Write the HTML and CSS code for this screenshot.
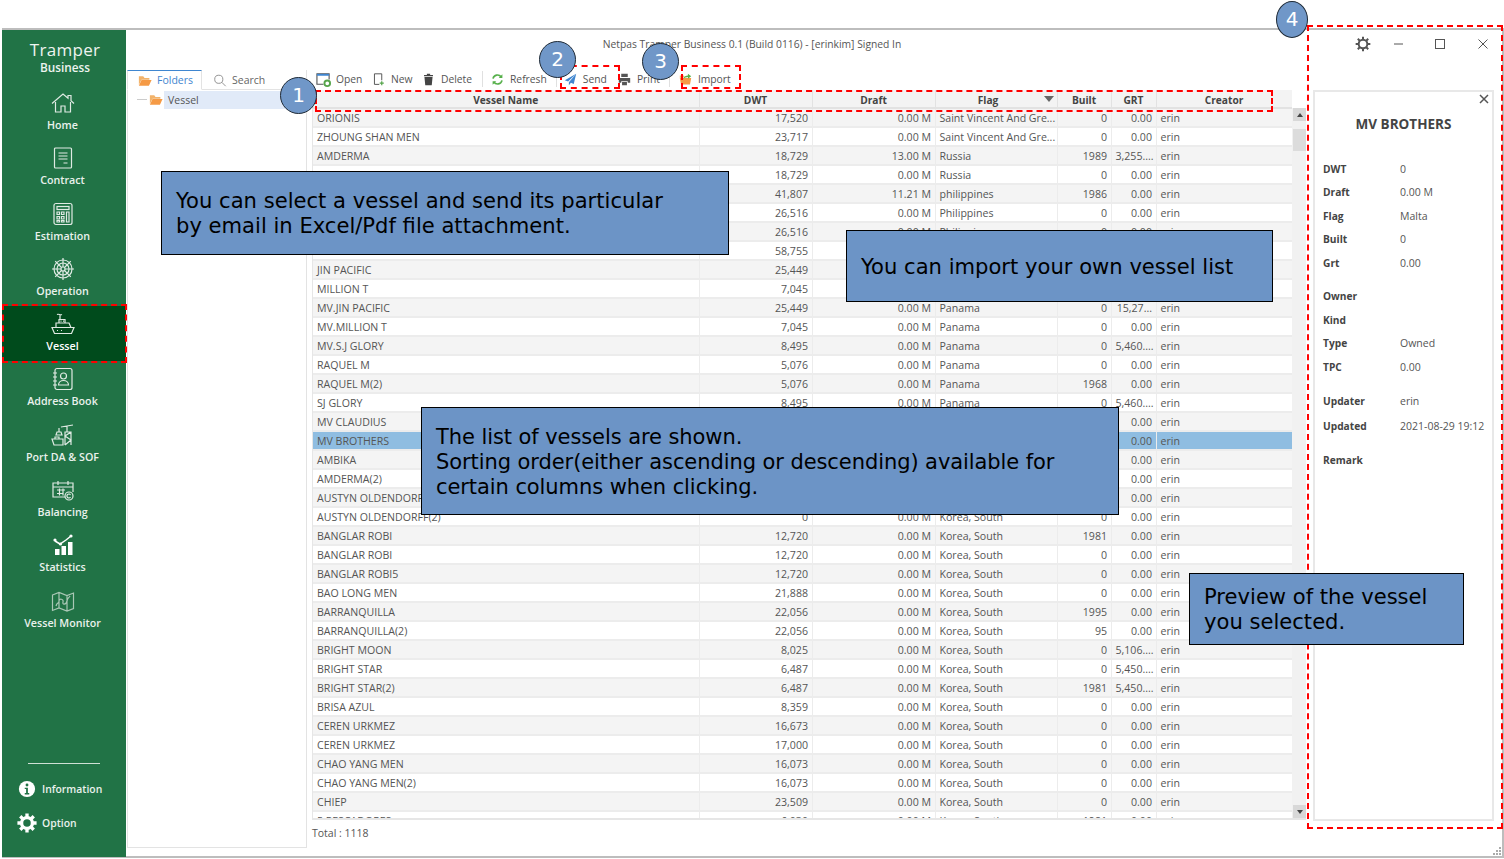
FILE: index.html
```html
<!DOCTYPE html>
<html lang="en">
<head>
  <meta charset="UTF-8">
  <title>Netpas Tramper Business</title>
  <link rel="stylesheet" href="styles.css">
</head>
<body>
  <div class="window">
    <nav class="sidebar">
      <div class="logo">
        <div class="logo-name">Tramper</div>
        <div class="logo-sub">Business</div>
      </div>
      <a class="nav-item">
        <svg class="nav-icon" viewBox="0 0 24 24"><path d="M1 12.500 12 3l5 4.200V4.500h3v5.300l3 2.700M4.500 11v10h5.500v-6h4v6h5.500V11"/></svg>
        Home
      </a>
      <a class="nav-item">
        <svg class="nav-icon" viewBox="0 0 24 24"><rect x="3.500" y="2" width="17" height="20" rx="1"/><path d="M7.500 7h9M7.500 10h9M7.500 13h9M12.500 17h4"/></svg>
        Contract
      </a>
      <a class="nav-item">
        <svg class="nav-icon" viewBox="0 0 24 24"><rect x="3" y="1.500" width="18" height="21" rx="2"/><rect x="6" y="4.500" width="12" height="3"/><path d="M6 10h2.500v2.500H6zM10.500 10H13v2.500h-2.500zM6 14.500h2.500V17H6zM10.500 14.500H13V17h-2.500zM6 18.500h2.500V20H6zM10.500 18.500H13V20h-2.500zM15.500 10H18v10h-2.500z"/></svg>
        Estimation
      </a>
      <a class="nav-item">
        <svg class="nav-icon" viewBox="0 0 24 24"><circle cx="12" cy="12" r="9"/><circle cx="12" cy="12" r="6"/><circle cx="12" cy="12" r="2"/><path d="M12 1v9M12 14v9M1 12h9M14 12h9M4.200 4.200l6.300 6.300M13.500 13.500l6.300 6.300M19.800 4.200l-6.300 6.300M10.500 13.500l-6.300 6.300"/></svg>
        Operation
      </a>
      <a class="nav-item nav-item-active">
        <svg class="nav-icon" viewBox="0 0 24 24"><path d="M1 15.500h22l-2.500 6h-17zM5 15.500V11h13l2 4.500M8 11V7.500h6V11M6 2.500c2-1 3 1 5 0M9 2.500v5"/><path d="M9.500 9.200h1M12 9.200h1M6 18.500h1M10 18.500h1"/></svg>
        Vessel
      </a>
      <a class="nav-item">
        <svg class="nav-icon" viewBox="0 0 24 24"><rect x="4" y="1.500" width="17" height="21" rx="2"/><circle cx="12.500" cy="9" r="3"/><path d="M7.500 18c0-6 10-6 10 0zM2 6h4M2 10h4M2 14h4M2 18h4"/></svg>
        Address Book
      </a>
      <a class="nav-item">
        <svg class="nav-icon" viewBox="0 0 24 24"><path d="M14 22V9h6v13M14 22l6-5-6-4 6-4M10 4l12-2M16 3v6M8 5v4M6 9h4l1 3H5zM1 16h11v6H3zM4 16v-2h4v2"/></svg>
        Port DA &amp; SOF
      </a>
      <a class="nav-item">
        <svg class="nav-icon" viewBox="0 0 24 24"><path d="M14 19H2V5h20v9"/><path d="M2 9h20M7 3v4M17 3v4M6 12h8M6 15.500h6M8.500 10.500v7M12 10.500v7"/><circle cx="18" cy="18" r="4"/><path d="M19.500 16.800a2 2 0 1 0 0 2.400"/></svg>
        Balancing
      </a>
      <a class="nav-item">
        <svg class="nav-icon nav-icon-solid" viewBox="0 0 24 24"><path d="M4 16h4.500v6H4zM10.500 13H15v9h-4.500zM17 9h4.500v13H17z"/><path class="line" d="M4 8l5 3 6-4 5-4"/><circle cx="4" cy="7" r="1.600"/><circle cx="9.500" cy="11" r="1.600"/><circle cx="20" cy="3" r="1.600"/></svg>
        Statistics
      </a>
      <a class="nav-item">
        <svg class="nav-icon nav-icon-dim" viewBox="0 0 24 24"><path d="M1.500 6 8 3.500l8 3 6.500-2.500v15.500L16 22l-8-3-6.500 2.500zM8 3.500V19M16 6.500V22M5 17c1-4 3-2 3-5s5-2 4 1 3 3 4-1 2-3 3-5"/></svg>
        Vessel Monitor
      </a>
      <div class="sidebar-foot">
        <div class="foot-rule"></div>
        <a class="foot-item foot-info">
          <svg class="foot-icon" viewBox="0 0 20 20"><circle cx="10" cy="10" r="9" fill="#fff"/><circle cx="10" cy="5.500" r="1.600" fill="#217346"/><path d="M7.500 8.500h3.500v6h1.500v1.500h-5v-1.500H9V10H7.500z" fill="#217346"/></svg>
          Information
        </a>
        <a class="foot-item foot-option">
          <svg class="foot-gear" viewBox="0 0 24 24"><circle cx="12" cy="12" r="6.500"/><path d="M12 .5v5M12 18.500v5M.5 12h5M18.500 12h5M3.900 3.900l3.500 3.500M16.600 16.600l3.500 3.500M20.100 3.900l-3.500 3.500M7.400 16.600l-3.500 3.500"/></svg>
          Option
        </a>
      </div>
    </nav>

    <div class="main">
      <header class="titlebar">
        <div class="title">Netpas Tramper Business 0.1 (Build 0116) - [erinkim] Signed In</div>
        <div class="window-buttons">
          <svg class="win-gear" viewBox="0 0 24 24"><circle cx="12" cy="12" r="6.500"/><path d="M12 1v4.500M12 18.500V23M1 12h4.500M18.500 12H23M4.200 4.200l3.200 3.200M16.600 16.600l3.200 3.200M19.800 4.200l-3.200 3.200M7.400 16.600l-3.200 3.200"/></svg>
          <svg class="win-min" viewBox="0 0 12 12"><path d="M1 6h9"/></svg>
          <svg class="win-max" viewBox="0 0 12 12"><rect x="1.500" y="1.500" width="9" height="9"/></svg>
          <svg class="win-close" viewBox="0 0 12 12"><path d="M1.500 1.500l9 9M10.500 1.500l-9 9"/></svg>
        </div>
      </header>

      <div class="workspace">
        <aside class="folders">
          <div class="tabs">
            <div class="tab tab-active">
              <svg class="tab-icon" viewBox="0 0 16 14"><path d="M1 12V2h5l1.500 2H13v2H4z" fill="#f2b36b"/><path d="M1 13l3-6.500h11.500L12.500 13z" fill="#f59a45"/></svg>
              Folders
            </div>
            <div class="tab">
              <svg class="tab-icon tab-search" viewBox="0 0 16 16"><circle cx="6.500" cy="6.500" r="5"/><path d="M10.300 10.300 15 15"/></svg>
              Search
            </div>
          </div>
          <div class="tree-row">
            <span class="tree-line"></span>
            <svg class="tab-icon tree-icon" viewBox="0 0 16 14"><path d="M1 12V2h5l1.500 2H13v2H4z" fill="#f2b36b"/><path d="M1 13l3-6.500h11.500L12.500 13z" fill="#f59a45"/></svg>
            <div class="tree-label">Vessel</div>
          </div>
        </aside>

        <section class="list">
          <div class="toolbar">
            <span class="tool">
              <svg class="tool-open-icon" viewBox="0 0 16 16"><path d="M8 13H1V2h13v6" fill="none" stroke="#555" stroke-width="1.200"/><path d="M1 2h13v2H1z" fill="#3f86d0"/><circle cx="12" cy="12" r="3" fill="none" stroke="#55a44a" stroke-width="2"/></svg>
              Open
            </span>
            <span class="tool">
              <svg viewBox="0 0 16 16"><path d="M9 14H3V1h9v8" fill="none" stroke="#555" stroke-width="1.200"/><path d="M12 10v5M9.500 12.500h5" stroke="#55a44a" stroke-width="1.500"/></svg>
              New
            </span>
            <span class="tool">
              <svg viewBox="0 0 16 16"><path d="M3 5h10l-1 10H4zM2.500 2.500h11V4h-11zM6 1h4v1.500H6z" fill="#444"/></svg>
              Delete
            </span>
            <span class="tool-sep"></span>
            <span class="tool">
              <svg viewBox="0 0 16 16" fill="none" stroke="#56b04a" stroke-width="2"><path d="M2.500 7a5.500 5.500 0 0 1 10-2M13.500 9a5.500 5.500 0 0 1-10 2"/><path d="M14 1.500V6H9.500z" fill="#56b04a" stroke="none"/><path d="M2 14.500V10h4.500z" fill="#56b04a" stroke="none"/></svg>
              Refresh
            </span>
            <span class="tool-sep tool-sep-narrow"></span>
            <span class="tool tool-send">
              <svg viewBox="0 0 16 16"><path d="M15 1 1 9l4 1.500zM15 1 6 11.500V15l2.500-3 3.500 1.500z" fill="#3f86d0"/></svg>
              Send
            </span>
            <span class="tool">
              <svg viewBox="0 0 16 16"><path d="M4 1h8v4H4zM1 6h14v6h-3v-2H4v2H1zM5 11h6v4H5z" fill="#555"/></svg>
              Print
            </span>
            <span class="tool-sep"></span>
            <span class="tool">
              <svg viewBox="0 0 16 16"><path d="M1 6h14l-1.500 8h-11z" fill="#f59a45"/><path d="M1 6V3h5l1 2" fill="#f2b36b"/><path d="M5 7c1-3 4-4 6-4V1l4 3-4 3V5C9 5 7 6 5 7z" fill="#56b04a"/></svg>
              Import
            </span>
          </div>

          <div class="grid">
            <div class="grid-table">
              <table>
                <colgroup>
                  <col class="col-name"><col class="col-dwt"><col class="col-draft"><col class="col-flag"><col class="col-built"><col class="col-grt"><col class="col-creator">
                </colgroup>
                <thead>
                  <tr>
                    <th>Vessel Name</th><th>DWT</th><th>Draft</th><th class="th-sort">Flag<i class="sort-arrow"></i></th><th>Built</th><th>GRT</th><th>Creator</th>
                  </tr>
                </thead>
                <tbody>
                  <tr><td>ORIONIS</td><td class="num">17,520</td><td class="num">0.00 M</td><td>Saint Vincent And Gre...</td><td class="num">0</td><td class="num">0.00</td><td>erin</td></tr>
                  <tr><td>ZHOUNG SHAN MEN</td><td class="num">23,717</td><td class="num">0.00 M</td><td>Saint Vincent And Gre...</td><td class="num">0</td><td class="num">0.00</td><td>erin</td></tr>
                  <tr><td>AMDERMA</td><td class="num">18,729</td><td class="num">13.00 M</td><td>Russia</td><td class="num">1989</td><td class="num">3,255....</td><td>erin</td></tr>
                  <tr><td>AMDERMA</td><td class="num">18,729</td><td class="num">0.00 M</td><td>Russia</td><td class="num">0</td><td class="num">0.00</td><td>erin</td></tr>
                  <tr><td>ANGEL</td><td class="num">41,807</td><td class="num">11.21 M</td><td>philippines</td><td class="num">1986</td><td class="num">0.00</td><td>erin</td></tr>
                  <tr><td>ANGEL</td><td class="num">26,516</td><td class="num">0.00 M</td><td>Philippines</td><td class="num">0</td><td class="num">0.00</td><td>erin</td></tr>
                  <tr><td>ANGEL</td><td class="num">26,516</td><td class="num">0.00 M</td><td>Philippines</td><td class="num">0</td><td class="num">0.00</td><td>erin</td></tr>
                  <tr><td>DIBOLL BAY</td><td class="num">58,755</td><td class="num">0.00 M</td><td>Panama</td><td class="num">0</td><td class="num">0.00</td><td>erin</td></tr>
                  <tr><td>JIN PACIFIC</td><td class="num">25,449</td><td class="num">0.00 M</td><td>Panama</td><td class="num">0</td><td class="num">0.00</td><td>erin</td></tr>
                  <tr><td>MILLION T</td><td class="num">7,045</td><td class="num">0.00 M</td><td>Panama</td><td class="num">0</td><td class="num">0.00</td><td>erin</td></tr>
                  <tr><td>MV.JIN PACIFIC</td><td class="num">25,449</td><td class="num">0.00 M</td><td>Panama</td><td class="num">0</td><td class="num">15,27...</td><td>erin</td></tr>
                  <tr><td>MV.MILLION T</td><td class="num">7,045</td><td class="num">0.00 M</td><td>Panama</td><td class="num">0</td><td class="num">0.00</td><td>erin</td></tr>
                  <tr><td>MV.S.J GLORY</td><td class="num">8,495</td><td class="num">0.00 M</td><td>Panama</td><td class="num">0</td><td class="num">5,460....</td><td>erin</td></tr>
                  <tr><td>RAQUEL M</td><td class="num">5,076</td><td class="num">0.00 M</td><td>Panama</td><td class="num">0</td><td class="num">0.00</td><td>erin</td></tr>
                  <tr><td>RAQUEL M(2)</td><td class="num">5,076</td><td class="num">0.00 M</td><td>Panama</td><td class="num">1968</td><td class="num">0.00</td><td>erin</td></tr>
                  <tr><td>SJ GLORY</td><td class="num">8,495</td><td class="num">0.00 M</td><td>Panama</td><td class="num">0</td><td class="num">5,460....</td><td>erin</td></tr>
                  <tr><td>MV CLAUDIUS</td><td class="num">0</td><td class="num">0.00 M</td><td>Malta</td><td class="num">0</td><td class="num">0.00</td><td>erin</td></tr>
                  <tr class="row-selected"><td>MV BROTHERS</td><td class="num">0</td><td class="num">0.00 M</td><td>Malta</td><td class="num">0</td><td class="num">0.00</td><td>erin</td></tr>
                  <tr><td>AMBIKA</td><td class="num">0</td><td class="num">0.00 M</td><td>Korea, South</td><td class="num">0</td><td class="num">0.00</td><td>erin</td></tr>
                  <tr><td>AMDERMA(2)</td><td class="num">0</td><td class="num">0.00 M</td><td>Korea, South</td><td class="num">0</td><td class="num">0.00</td><td>erin</td></tr>
                  <tr><td>AUSTYN OLDENDORFF</td><td class="num">0</td><td class="num">0.00 M</td><td>Korea, South</td><td class="num">0</td><td class="num">0.00</td><td>erin</td></tr>
                  <tr><td>AUSTYN OLDENDORFF(2)</td><td class="num">0</td><td class="num">0.00 M</td><td>Korea, South</td><td class="num">0</td><td class="num">0.00</td><td>erin</td></tr>
                  <tr><td>BANGLAR ROBI</td><td class="num">12,720</td><td class="num">0.00 M</td><td>Korea, South</td><td class="num">1981</td><td class="num">0.00</td><td>erin</td></tr>
                  <tr><td>BANGLAR ROBI</td><td class="num">12,720</td><td class="num">0.00 M</td><td>Korea, South</td><td class="num">0</td><td class="num">0.00</td><td>erin</td></tr>
                  <tr><td>BANGLAR ROBI5</td><td class="num">12,720</td><td class="num">0.00 M</td><td>Korea, South</td><td class="num">0</td><td class="num">0.00</td><td>erin</td></tr>
                  <tr><td>BAO LONG MEN</td><td class="num">21,888</td><td class="num">0.00 M</td><td>Korea, South</td><td class="num">0</td><td class="num">0.00</td><td>erin</td></tr>
                  <tr><td>BARRANQUILLA</td><td class="num">22,056</td><td class="num">0.00 M</td><td>Korea, South</td><td class="num">1995</td><td class="num">0.00</td><td>erin</td></tr>
                  <tr><td>BARRANQUILLA(2)</td><td class="num">22,056</td><td class="num">0.00 M</td><td>Korea, South</td><td class="num">95</td><td class="num">0.00</td><td>erin</td></tr>
                  <tr><td>BRIGHT MOON</td><td class="num">8,025</td><td class="num">0.00 M</td><td>Korea, South</td><td class="num">0</td><td class="num">5,106....</td><td>erin</td></tr>
                  <tr><td>BRIGHT STAR</td><td class="num">6,487</td><td class="num">0.00 M</td><td>Korea, South</td><td class="num">0</td><td class="num">5,450....</td><td>erin</td></tr>
                  <tr><td>BRIGHT STAR(2)</td><td class="num">6,487</td><td class="num">0.00 M</td><td>Korea, South</td><td class="num">1981</td><td class="num">5,450....</td><td>erin</td></tr>
                  <tr><td>BRISA AZUL</td><td class="num">8,359</td><td class="num">0.00 M</td><td>Korea, South</td><td class="num">0</td><td class="num">0.00</td><td>erin</td></tr>
                  <tr><td>CEREN URKMEZ</td><td class="num">16,673</td><td class="num">0.00 M</td><td>Korea, South</td><td class="num">0</td><td class="num">0.00</td><td>erin</td></tr>
                  <tr><td>CEREN URKMEZ</td><td class="num">17,000</td><td class="num">0.00 M</td><td>Korea, South</td><td class="num">0</td><td class="num">0.00</td><td>erin</td></tr>
                  <tr><td>CHAO YANG MEN</td><td class="num">16,073</td><td class="num">0.00 M</td><td>Korea, South</td><td class="num">0</td><td class="num">0.00</td><td>erin</td></tr>
                  <tr><td>CHAO YANG MEN(2)</td><td class="num">16,073</td><td class="num">0.00 M</td><td>Korea, South</td><td class="num">0</td><td class="num">0.00</td><td>erin</td></tr>
                  <tr><td>CHIEP</td><td class="num">23,509</td><td class="num">0.00 M</td><td>Korea, South</td><td class="num">0</td><td class="num">0.00</td><td>erin</td></tr>
                  <tr><td>5 PESCADORES</td><td class="num">6,030</td><td class="num">0.00 M</td><td>Korea, South</td><td class="num">1981</td><td class="num">0.00</td><td>erin</td></tr>
                </tbody>
              </table>
            </div>
            <div class="scrollbar">
              <div class="scroll-head"></div>
              <div class="scroll-btn"><i class="arrow-up"></i></div>
              <div class="scroll-thumb"></div>
              <div class="scroll-track"></div>
              <div class="scroll-btn"><i class="arrow-down"></i></div>
            </div>
          </div>
          <div class="total">Total : 1118</div>
        </section>

        <aside class="preview">
          <svg class="preview-close" viewBox="0 0 10 10"><path d="M1 1l8 8M9 1 1 9"/></svg>
          <h2 class="preview-title">MV BROTHERS</h2>
          <dl class="props">
            <dt>DWT</dt><dd>0</dd>
            <dt>Draft</dt><dd>0.00 M</dd>
            <dt>Flag</dt><dd>Malta</dd>
            <dt>Built</dt><dd>0</dd>
            <dt>Grt</dt><dd>0.00</dd>
          </dl>
          <dl class="props">
            <dt>Owner</dt><dd></dd>
            <dt>Kind</dt><dd></dd>
            <dt>Type</dt><dd>Owned</dd>
            <dt>TPC</dt><dd>0.00</dd>
          </dl>
          <dl class="props props-wide">
            <dt>Updater</dt><dd>erin</dd>
            <dt>Updated</dt><dd>2021-08-29 19:12</dd>
          </dl>
          <dl class="props">
            <dt>Remark</dt><dd></dd>
          </dl>
        </aside>
      </div>
    </div>
    <svg class="grip" viewBox="0 0 8 8"><path d="M6 0h2v2H6zM3 3h2v2H3zM6 3h2v2H6zM0 6h2v2H0zM3 6h2v2H3zM6 6h2v2H6z"/></svg>
  </div>

  <!-- annotations on top of the app screenshot -->
  <div class="mark mark-vessel"></div>
  <div class="mark mark-header"></div>
  <div class="mark mark-send"></div>
  <div class="mark mark-import"></div>
  <div class="mark mark-preview"></div>

  <div class="callout callout-send">You can select a vessel and send its particular<br>by email in Excel/Pdf file attachment.</div>
  <div class="callout callout-import">You can import your own vessel list</div>
  <div class="callout callout-list">The list of vessels are shown.<br>Sorting order(either ascending or descending) available for<br>certain columns when clicking.</div>
  <div class="callout callout-preview">Preview of the vessel<br>you selected.</div>

  <div class="badge badge-1">1</div>
  <div class="badge badge-2">2</div>
  <div class="badge badge-3">3</div>
  <div class="badge badge-4">4</div>
</body>
</html>
```

FILE: styles.css
```css
* {
  box-sizing: border-box;
}
body {
  margin: 0;
  height: 859px;
  overflow: hidden;
  position: relative;
  background: #fff;
  font-family: "Open Sans", "Noto Sans", sans-serif;
  font-size: 10.500px;
  color: #555;
}

/* window */
.window {
  position: relative;
  display: flex;
  margin: 28px 0 0 2px;
  height: 830px;
  border-top: 2px solid #bdbdbd;
  border-right: 2px solid #bdbdbd;
  border-bottom: 2px solid #bdbdbd;
}
.grip {
  position: absolute;
  right: 1px;
  bottom: 1px;
  width: 8px;
  height: 8px;
  fill: #aaa;
}

/* sidebar */
.sidebar {
  width: 124px;
  margin-bottom: -1px;
  display: flex;
  flex-direction: column;
  background: #217346;
  color: #e9f1ec;
}
.logo {
  height: 55px;
  padding: 9px 0 0 2px;
  text-align: center;
  color: #eef4f0;
}
.logo-name {
  font-size: 17px;
  line-height: 22px;
  letter-spacing: 0.3px;
}
.logo-sub {
  font-size: 11.800px;
  line-height: 13px;
  font-weight: 600;
}
.nav-item {
  height: 55.300px;
  display: flex;
  flex-direction: column;
  align-items: center;
  padding: 6px 3px 0 0;
  font-size: 10.700px;
  line-height: 14px;
  font-weight: 600;
}
.nav-item-active {
  background: #004b1c;
  color: #fff;
}
.nav-icon {
  width: 24px;
  height: 24px;
  margin-bottom: 3px;
  fill: none;
  stroke: #dfeae3;
  stroke-width: 1.200;
}
.nav-icon-solid {
  fill: #fff;
  stroke: none;
}
.nav-icon-solid .line {
  fill: none;
  stroke: #fff;
  stroke-width: 1.500;
}
.nav-icon-dim {
  stroke: #a9c7b5;
}
.sidebar-foot {
  margin-top: auto;
  padding-bottom: 24px;
}
.foot-rule {
  width: 72px;
  height: 1px;
  margin: 0 0 16px 26px;
  background: #cfe0d5;
}
.foot-item {
  display: flex;
  align-items: center;
  font-size: 10.400px;
  font-weight: 600;
}
.foot-info {
  height: 18px;
  padding-left: 16px;
  gap: 6px;
  margin-bottom: 15px;
}
.foot-option {
  height: 20px;
  padding-left: 15px;
  gap: 5px;
}
.foot-icon {
  width: 18px;
  height: 18px;
}
.foot-gear {
  width: 20px;
  height: 20px;
  fill: none;
  stroke: #fff;
  stroke-width: 4;
}

/* main area */
.main {
  flex: 1;
  display: flex;
  flex-direction: column;
  min-width: 0;
}
.titlebar {
  height: 40px;
  flex: none;
  position: relative;
  display: flex;
  justify-content: flex-end;
}
.title {
  position: absolute;
  left: 0;
  width: 1252px;
  top: 7px;
  text-align: center;
  font-size: 10.300px;
  line-height: 15px;
}
.window-buttons {
  width: 140px;
  margin-right: 7px;
  padding-top: 6px;
  height: 24px;
  display: flex;
  align-items: flex-start;
  fill: none;
  stroke: #555;
}
.window-buttons svg {
  flex: none;
}
.win-gear {
  width: 16px;
  height: 16px;
  stroke-width: 3;
  margin-right: 22px;
}
.win-min,
.win-max,
.win-close {
  width: 12px;
  height: 12px;
  margin-top: 2px;
  stroke-width: 1;
}
.win-min {
  margin-right: 29px;
}
.win-max {
  margin-right: 31px;
}
.workspace {
  flex: 1;
  display: flex;
  min-height: 0;
}

/* folder pane */
.folders {
  width: 180px;
  height: 778px;
  margin-left: 1px;
  flex: none;
  border: 1px solid #e3e3e3;
  border-top: none;
}
.tabs {
  display: flex;
  height: 20px;
  margin-left: -1px;
  border-bottom: 1px solid #e3e3e3;
}
.tab {
  display: flex;
  align-items: center;
  gap: 5px;
  height: 20px;
  padding: 0 11px;
  color: #666;
}
.tab-active {
  width: 75px;
  padding-left: 10px;
  color: #3f86d0;
  border-top: 1px solid #3f86d0;
  border-right: 1px solid #e3e3e3;
  border-left: 1px solid #e3e3e3;
  border-bottom: 1px solid #fff;
}
.tab-icon {
  width: 14px;
  height: 13px;
  flex: none;
}
.tab-search {
  fill: none;
  stroke: #888;
  stroke-width: 1.100;
}
.tree-row {
  display: flex;
  align-items: center;
  height: 19px;
  padding-left: 9px;
}
.tree-line {
  width: 10px;
  height: 1px;
  background: #ccc;
}
.tree-icon {
  margin-left: 2px;
  margin-right: 1px;
}
.tree-label {
  flex: 1;
  height: 18px;
  line-height: 18px;
  padding-left: 4px;
  background: #e1eaf8;
}

/* list */
.list {
  width: 994px;
  margin-left: 5px;
  flex: none;
  display: flex;
  flex-direction: column;
}
.toolbar {
  height: 20px;
  display: flex;
  align-items: center;
  padding-left: 4px;
  margin-top: -1px;
  margin-bottom: 1px;
  font-size: 10.300px;
}
.tool {
  display: flex;
  align-items: center;
  gap: 6px;
  margin-right: 9.500px;
  white-space: nowrap;
}
.tool-send {
  margin-right: 11px;
}
.tool svg {
  width: 13px;
  height: 13px;
  flex: none;
}
.tool .tool-open-icon {
  width: 15px;
  height: 15px;
  margin-right: -1px;
}
.tool-sep {
  width: 1px;
  height: 16px;
  background: #e0e0e0;
  margin-right: 8.500px;
}
.tool-sep-narrow {
  margin-right: 6.500px;
}
.grid {
  height: 730px;
  display: flex;
  border-left: 1px solid #e6e6e6;
  border-bottom: 2px solid #e6e6e6;
}
.grid-table {
  width: 979px;
  overflow: hidden;
  flex: none;
}
table {
  width: 979px;
  table-layout: fixed;
  border-collapse: collapse;
}
.col-name { width: 386px; }
.col-dwt { width: 113px; }
.col-draft { width: 123px; }
.col-flag { width: 122px; }
.col-built { width: 54px; }
.col-grt { width: 45px; }
.col-creator { width: 136px; }
th {
  height: 18px;
  padding: 2px 3px 0;
  background: #f3f3f3;
  font-size: 10.200px;
  font-weight: 700;
  color: #444;
  border-right: 1px solid #e2e2e2;
  border-bottom: 2px solid #e2e2e2;
}
.th-sort {
  position: relative;
  padding-right: 19px;
}
.sort-arrow {
  position: absolute;
  right: 3px;
  top: 6px;
  border-left: 5px solid transparent;
  border-right: 5px solid transparent;
  border-top: 6px solid #666;
}
td {
  height: 19px;
  padding: 0 3px 0 4px;
  font-size: 10.600px;
  white-space: nowrap;
  overflow: hidden;
  border-right: 1px solid #ececec;
  border-bottom: 2px solid #ececec;
}
.num {
  text-align: right;
  padding-right: 3.500px;
}
tbody tr:nth-child(odd) {
  background: #f4f4f4;
}
tbody tr.row-selected {
  background: #8fbde1;
}
.scrollbar {
  flex: 1;
  display: flex;
  flex-direction: column;
  background: #f1f1f1;
}
.scroll-head {
  height: 18px;
  background: #fff;
}
.scroll-btn {
  height: 13px;
  margin-left: 1px;
  background: #d8d8d8;
  display: flex;
  align-items: center;
  justify-content: center;
}
.arrow-up {
  border-left: 3px solid transparent;
  border-right: 3px solid transparent;
  border-bottom: 4px solid #444;
}
.arrow-down {
  border-left: 3px solid transparent;
  border-right: 3px solid transparent;
  border-top: 4px solid #444;
}
.scroll-thumb {
  height: 22px;
  margin: 8px 0 0 1px;
  background: #dcdcdc;
}
.scroll-track {
  flex: 1;
}
.total {
  padding-top: 6px;
  line-height: 15px;
}

/* preview */
.preview {
  position: relative;
  width: 181px;
  height: 731px;
  margin: 20px 0 0 7px;
  flex: none;
  border: 2px solid #e8e8e8;
  padding: 0 8px;
}
.preview-close {
  position: absolute;
  top: 2px;
  right: 3px;
  width: 10px;
  height: 10px;
  fill: none;
  stroke: #555;
  stroke-width: 1.500;
}
.preview-title {
  margin: 23px 0 23px;
  font-size: 13.500px;
  line-height: 19px;
  font-weight: 700;
  text-align: center;
  color: #444;
}
.props {
  display: grid;
  grid-template-columns: 77px 1fr;
  grid-auto-rows: 23.500px;
  align-items: center;
  margin: 0 0 10px;
}
.props-wide {
  grid-auto-rows: 25px;
}
.props dt {
  font-size: 10.200px;
  font-weight: 700;
  color: #444;
}
.props dd {
  margin: 0;
  white-space: nowrap;
}

/* annotations */
.mark {
  position: absolute;
  border: 2px dashed #f00;
}
.mark-vessel { left: 2px; top: 304px; width: 125px; height: 59px; }
.mark-header { left: 315px; top: 90px; width: 958px; height: 22px; }
.mark-send { left: 560px; top: 65px; width: 60px; height: 24px; }
.mark-import { left: 681px; top: 65px; width: 60px; height: 24px; }
.mark-preview { left: 1307px; top: 25px; width: 196px; height: 804px; }

.callout {
  position: absolute;
  background: #6c94c6;
  border: 1px solid #000;
  padding-left: 14px;
  font-family: "DejaVu Sans", sans-serif;
  font-size: 21.100px;
  line-height: 25px;
  color: #000;
  white-space: nowrap;
}
.callout-send { left: 161px; top: 171px; width: 568px; height: 84px; padding-top: 16px; }
.callout-import { left: 846px; top: 230px; width: 427px; height: 72px; padding-top: 23px; }
.callout-list { left: 421px; top: 407px; width: 698px; height: 108px; padding-top: 17px; font-size: 21px; letter-spacing: -0.080px; }
.callout-preview { left: 1189px; top: 573px; width: 275px; height: 72px; padding-top: 10px; }

.badge {
  position: absolute;
  width: 37px;
  height: 37px;
  border-radius: 50%;
  background: #7097c8;
  border: 1px solid #1f2a36;
  color: #fff;
  font-family: "DejaVu Sans", sans-serif;
  font-size: 20px;
  line-height: 35px;
  text-align: center;
}
.badge-1 { left: 280px; top: 77px; }
.badge-2 { left: 539px; top: 41px; }
.badge-3 { left: 642px; top: 43px; }
.badge-4 { left: 1276px; top: 1px; width: 32px; height: 37px; }
```
